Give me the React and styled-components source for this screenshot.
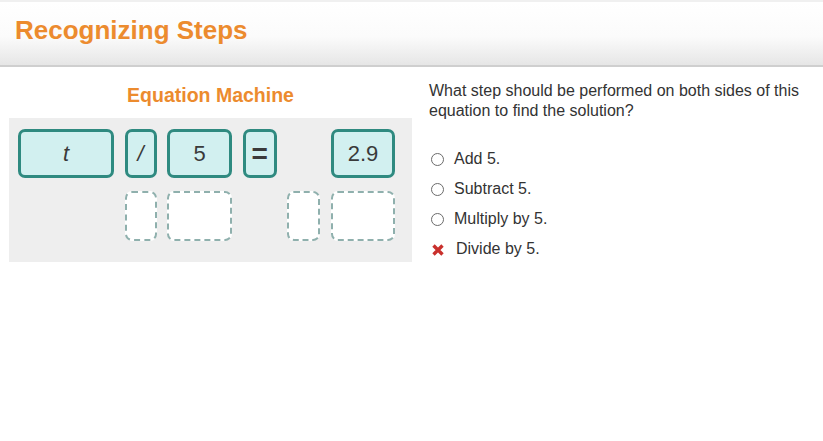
import React from 'react';
import styled, { createGlobalStyle } from 'styled-components';

const GlobalStyle = createGlobalStyle`
  body {
    margin: 0;
    background: #fff;
    font-family: "Liberation Sans", Arial, sans-serif;
    color: #333;
  }
`;

const Header = styled.header`
  height: 67px;
  border-top: 2px solid #f0f0f0;
  border-bottom: 2px solid #cfcfcf;
  background: linear-gradient(to bottom, #ffffff 0%, #fbfbfb 55%, #e6e6e6 100%);
  box-sizing: border-box;
  display: flex;
  align-items: center;
  padding-left: 15px;
`;

const Title = styled.h1`
  margin: 0 0 6px;
  font-size: 26px;
  font-weight: bold;
  color: #ec8b2e;
`;

const Main = styled.main`
  display: flex;
  padding-top: 14px;
`;

const LeftColumn = styled.section`
  margin-left: 9px;
  width: 403px;
`;

const MachineTitle = styled.h2`
  margin: 0 0 9px;
  height: 28px;
  line-height: 28px;
  text-align: center;
  font-size: 19.5px;
  font-weight: bold;
  color: #ec8b2e;
`;

const Panel = styled.div`
  background: #eeeeee;
  padding: 11px 0 21px 9px;
  display: grid;
  grid-template-columns: 96px 32px 65px 34px 33px 64px;
  grid-template-rows: 49px 50px;
  column-gap: 10.6px;
  row-gap: 13px;
`;

const Tile = styled.div`
  grid-column: ${(p) => p.col};
  grid-row: 1;
  box-sizing: border-box;
  border: 3px solid #2f8a80;
  border-radius: 7px;
  background: #d2f0f0;
  display: flex;
  align-items: center;
  justify-content: center;
  font-size: ${(p) => (p.big ? '28px' : '22px')};
  color: #3a3a3a;
  font-style: ${(p) => (p.italic ? 'italic' : 'normal')};
  font-weight: ${(p) => (p.bold ? 'bold' : 'normal')};
`;

const Slot = styled.div`
  grid-column: ${(p) => p.col};
  grid-row: 2;
  box-sizing: border-box;
  border: 2px dashed #8fb0ad;
  border-radius: 7px;
  background: #fff;
`;

const RightColumn = styled.section`
  margin-left: 17px;
  width: 375px;
`;

const Question = styled.p`
  margin: 0;
  font-size: 16px;
  line-height: 20px;
  color: #333;
`;

const Options = styled.ul`
  list-style: none;
  margin: 23px 0 0;
  padding: 0;
`;

const Option = styled.li`
  display: flex;
  align-items: center;
  height: 30px;
  font-size: 16px;
  color: #333;
`;

const Radio = styled.span`
  width: 13px;
  height: 13px;
  box-sizing: border-box;
  border: 1px solid #6b6b6b;
  border-radius: 50%;
  background: #fff;
  margin: 0 10px 0 2px;
  flex-shrink: 0;
`;

const Cross = styled.svg`
  width: 14px;
  height: 14px;
  margin: 2px 11px 0 2px;
  flex-shrink: 0;
`;

const options = [
  { label: 'Add 5.' },
  { label: 'Subtract 5.' },
  { label: 'Multiply by 5.' },
  { label: 'Divide by 5.', wrong: true },
];

export default function App() {
  return (
    <>
      <GlobalStyle />
      <Header>
        <Title>Recognizing Steps</Title>
      </Header>
      <Main>
        <LeftColumn>
          <MachineTitle>Equation Machine</MachineTitle>
          <Panel>
            <Tile col={1} italic>t</Tile>
            <Tile col={2} italic>/</Tile>
            <Tile col={3}>5</Tile>
            <Tile col={4} bold big>=</Tile>
            <Tile col={6}>2.9</Tile>
            <Slot col={2} />
            <Slot col={3} />
            <Slot col={5} />
            <Slot col={6} />
          </Panel>
        </LeftColumn>
        <RightColumn>
          <Question>
            What step should be performed on both sides of this equation to find the solution?
          </Question>
          <Options>
            {options.map((o) => (
              <Option key={o.label}>
                {o.wrong ? (
                  <Cross viewBox="0 0 14 14">
                    <path d="M2.5 2.5 L11.5 11.5 M11.5 2.5 L2.5 11.5" stroke="#c9302c" strokeWidth="3.4" strokeLinecap="butt" />
                  </Cross>
                ) : (
                  <Radio />
                )}
                {o.label}
              </Option>
            ))}
          </Options>
        </RightColumn>
      </Main>
    </>
  );
}
